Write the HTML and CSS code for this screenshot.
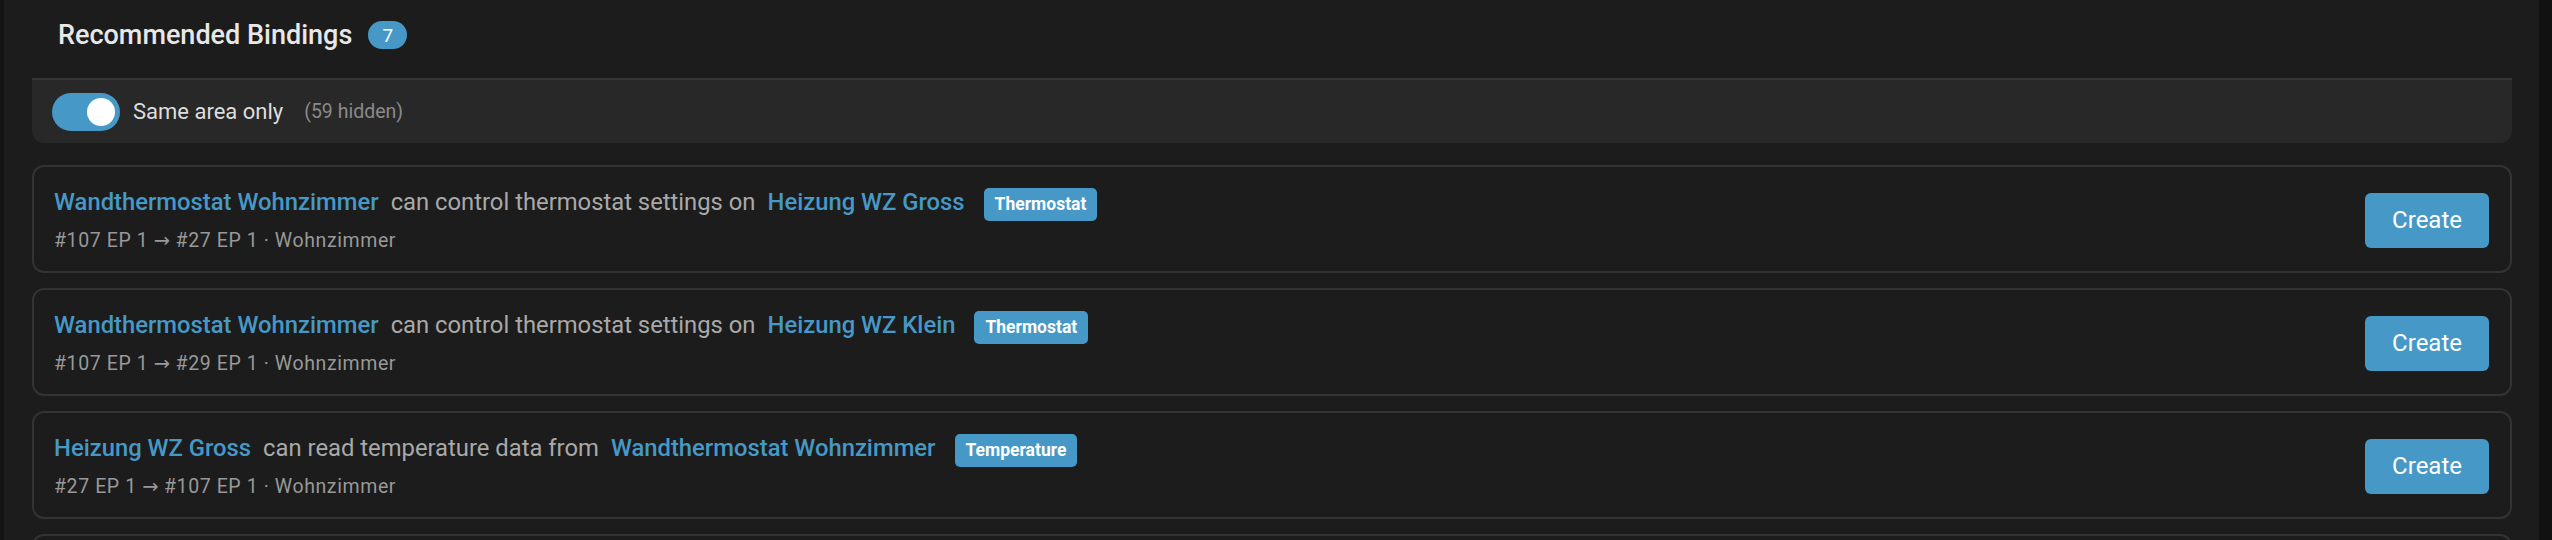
FILE: index.html
```html
<!DOCTYPE html>
<html lang="de">
<head>
<meta charset="utf-8">
<title>Recommended Bindings</title>
<link rel="stylesheet" href="styles.css">
</head>
<body>
<div class="app">
  <div class="sidebar-edge"></div>
  <main class="content">
    <header class="section-header">
      <h2 class="section-title">Recommended Bindings</h2>
      <span class="count-badge">7</span>
    </header>
    <div class="filter-wrap">
      <div class="filter-bar">
        <span class="toggle"><span class="toggle-knob"></span></span>
        <span class="filter-label">Same area only</span>
        <span class="filter-hidden">(59 hidden)</span>
      </div>
    </div>
    <ul class="bindings">
      <li class="binding-card">
        <div class="binding-info">
          <div class="binding-line">
            <span class="node-name">Wandthermostat Wohnzimmer</span>
            <span class="binding-verb">can control thermostat settings on</span>
            <span class="node-name">Heizung WZ Gross</span>
            <span class="cc-badge">Thermostat</span>
          </div>
          <div class="binding-meta">#107 EP 1 <span class="arrow">→</span> #27 EP 1 · Wohnzimmer</div>
        </div>
        <button class="create-btn">Create</button>
      </li>
      <li class="binding-card">
        <div class="binding-info">
          <div class="binding-line">
            <span class="node-name">Wandthermostat Wohnzimmer</span>
            <span class="binding-verb">can control thermostat settings on</span>
            <span class="node-name">Heizung WZ Klein</span>
            <span class="cc-badge">Thermostat</span>
          </div>
          <div class="binding-meta">#107 EP 1 <span class="arrow">→</span> #29 EP 1 · Wohnzimmer</div>
        </div>
        <button class="create-btn">Create</button>
      </li>
      <li class="binding-card">
        <div class="binding-info">
          <div class="binding-line">
            <span class="node-name">Heizung WZ Gross</span>
            <span class="binding-verb">can read temperature data from</span>
            <span class="node-name">Wandthermostat Wohnzimmer</span>
            <span class="cc-badge">Temperature</span>
          </div>
          <div class="binding-meta">#27 EP 1 <span class="arrow">→</span> #107 EP 1 · Wohnzimmer</div>
        </div>
        <button class="create-btn">Create</button>
      </li>
      <li class="binding-card">
        <div class="binding-info">
          <div class="binding-line">
            <span class="node-name">Heizung WZ Klein</span>
            <span class="binding-verb">can read temperature data from</span>
            <span class="node-name">Wandthermostat Wohnzimmer</span>
            <span class="cc-badge">Temperature</span>
          </div>
          <div class="binding-meta">#29 EP 1 <span class="arrow">→</span> #107 EP 1 · Wohnzimmer</div>
        </div>
        <button class="create-btn">Create</button>
      </li>
    </ul>
  </main>
  <div class="scroll-edge"></div>
</div>
</body>
</html>
```

FILE: styles.css
```css
* { box-sizing: border-box; }

html, body {
  margin: 0;
  padding: 0;
  height: 100%;
  background: #1c1c1c;
  font-family: Roboto, "Liberation Sans", sans-serif;
  overflow: hidden;
}

.app {
  display: flex;
  height: 540px;
  overflow: hidden;
}

.sidebar-edge {
  width: 4px;
  flex: none;
  background: #141414;
}

.scroll-edge {
  width: 13px;
  flex: none;
  background: #111111;
}

.content {
  flex: 1;
  min-width: 0;
  padding: 0 27px 0 28px;
}

.section-header {
  height: 78px;
  display: flex;
  align-items: center;
  padding: 0 0 8px 26px;
  gap: 16px;
}

.section-title {
  margin: 0;
  font-size: 27px;
  font-weight: 500;
  color: #e8e8e8;
}

.count-badge {
  display: inline-flex;
  align-items: center;
  justify-content: center;
  width: 39px;
  height: 28px;
  border-radius: 14px;
  background: #4699c7;
  color: #ffffff;
  font-size: 19px;
  line-height: 1;
}

.filter-wrap {
  border-top: 2px solid #363636;
}

.filter-bar {
  height: 63px;
  background: #282828;
  border-radius: 0 0 12px 12px;
  display: flex;
  align-items: center;
  padding-left: 20px;
}

.toggle {
  width: 68px;
  height: 38px;
  border-radius: 19px;
  background: #4699c7;
  display: flex;
  align-items: center;
  justify-content: flex-end;
  padding-right: 5px;
  flex: none;
}

.toggle-knob {
  width: 28px;
  height: 28px;
  border-radius: 50%;
  background: #ffffff;
}

.filter-label {
  margin-left: 13px;
  font-size: 22px;
  color: #dedede;
}

.filter-hidden {
  margin-left: 21px;
  font-size: 19.5px;
  color: #8a8a8a;
}

.bindings {
  list-style: none;
  margin: 22px 0 0;
  padding: 0;
  display: flex;
  flex-direction: column;
  gap: 15px;
}

.binding-card {
  display: flex;
  align-items: center;
  justify-content: space-between;
  border: 2px solid #333333;
  border-radius: 12px;
  padding: 21px 21px 19px 20px;
  background: #1c1c1c;
}

.binding-info {
  display: flex;
  flex-direction: column;
  gap: 8px;
}

.binding-line {
  display: flex;
  align-items: baseline;
  gap: 12px;
}

.node-name {
  font-size: 23.8px;
  font-weight: 500;
  color: #4699c7;
}

.binding-verb {
  font-size: 23.8px;
  color: #a9a9a9;
}

.cc-badge {
  margin-left: 7px;
  background: #4699c7;
  color: #ffffff;
  font-size: 17.5px;
  font-weight: 700;
  line-height: 21px;
  padding: 6px 11px;
  border-radius: 5px;
}

.binding-meta {
  font-size: 19.5px;
  letter-spacing: 0.6px;
  color: #999999;
}

.arrow {
  font-family: "DejaVu Sans", sans-serif;
  letter-spacing: 0;
}

.create-btn {
  height: 55px;
  padding: 0 27px;
  border: none;
  border-radius: 6px;
  background: #4699c7;
  color: #ffffff;
  font-family: Roboto, "Liberation Sans", sans-serif;
  font-size: 24px;
  cursor: pointer;
}
```
